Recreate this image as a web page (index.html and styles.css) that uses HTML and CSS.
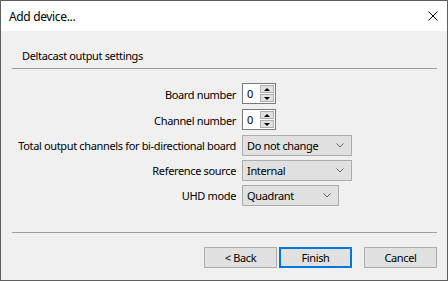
FILE: index.html
```html
<!DOCTYPE html>
<html lang="en">
<head>
  <meta charset="UTF-8" />
  <title>Add device...</title>
  <link rel="stylesheet" href="styles.css">
</head>
<body>
  <div class="window">
    <!-- title bar -->
    <div class="titlebar">
      <span class="title">Add device...</span>
      <svg class="close" width="10" height="10" viewBox="0 0 10 10">
        <path d="M0.5 0.5 L9.5 9.5 M9.5 0.5 L0.5 9.5" stroke="#000" stroke-width="1" fill="none"/>
      </svg>
    </div>

    <div class="content">
      <div class="heading">Deltacast output settings</div>
      <div class="rule"></div>

      <!-- settings form -->
      <div class="form">
        <label class="label">Board number</label>
        <div class="spin">
          <div class="spin-field">0</div>
          <div class="spin-btns">
            <div class="spin-btn"><span class="tri up"></span></div>
            <div class="spin-btn"><span class="tri down"></span></div>
          </div>
        </div>

        <label class="label">Channel number</label>
        <div class="spin">
          <div class="spin-field">0</div>
          <div class="spin-btns">
            <div class="spin-btn"><span class="tri up"></span></div>
            <div class="spin-btn"><span class="tri down"></span></div>
          </div>
        </div>

        <label class="label">Total output channels for bi-directional board</label>
        <div class="combo wide">
          <span>Do not change</span>
          <svg class="chev" width="8" height="5" viewBox="0 0 8 5"><path d="M0.5 0.5 L4 4 L7.5 0.5" stroke="#606060" fill="none"/></svg>
        </div>

        <label class="label">Reference source</label>
        <div class="combo wide">
          <span>Internal</span>
          <svg class="chev" width="8" height="5" viewBox="0 0 8 5"><path d="M0.5 0.5 L4 4 L7.5 0.5" stroke="#606060" fill="none"/></svg>
        </div>

        <label class="label">UHD mode</label>
        <div class="combo narrow">
          <span>Quadrant</span>
          <svg class="chev" width="8" height="5" viewBox="0 0 8 5"><path d="M0.5 0.5 L4 4 L7.5 0.5" stroke="#606060" fill="none"/></svg>
        </div>
      </div>

      <div class="rule bottom"></div>

      <!-- wizard buttons -->
      <div class="buttons">
        <button class="button">&lt; Back</button>
        <button class="button default">Finish</button>
        <button class="button cancel">Cancel</button>
      </div>
    </div>
  </div>
</body>
</html>
```

FILE: styles.css
```css
/* page & window frame */
body {
  margin: 0;
  font-family: "Noto Sans", sans-serif;
  font-size: 11px;
  letter-spacing: -0.35px;
  color: #000;
}
.window {
  width: 448px;
  height: 281px;
  box-sizing: border-box;
  border: 1px solid #5f5f5f;
  background: #f0f0f0;
}

/* title bar */
.titlebar {
  height: 30px;
  background: #fff;
  display: flex;
  align-items: center;
  padding: 0 9px 0 8px;
}
.title {
  flex: 1;
  font-size: 12px;
}
.close {
  display: block;
}

/* body */
.content {
  padding: 0 10px 0 11px;
}
.heading {
  padding: 17px 0 0 10px;
  height: 20px;
  line-height: 16px;
}
.rule {
  height: 1px;
  background: #a0a0a0;
}
.rule.bottom {
  margin-top: 26px;
}

/* form rows */
.form {
  display: grid;
  grid-template-columns: 224px auto;
  column-gap: 6px;
  row-gap: 4px;
  align-items: center;
  justify-items: start;
  margin-top: 14px;
}
.label {
  justify-self: end;
  white-space: nowrap;
}

/* spin box */
.spin {
  display: flex;
  height: 21px;
  margin-bottom: 1px;
}
.spin-field {
  width: 17px;
  box-sizing: border-box;
  border: 1px solid #7a7a7a;
  border-right: none;
  background: #fff;
  padding-left: 4px;
  line-height: 19px;
}
.spin-btns {
  display: flex;
  flex-direction: column;
  justify-content: space-between;
  width: 17px;
  border: 1px solid #7a7a7a;
  border-left: none;
  background: #fff;
  padding: 1px;
  box-sizing: border-box;
}
.spin-btn {
  height: 8px;
  box-sizing: border-box;
  background: #e1e1e1;
  border: 1px solid #adadad;
  display: flex;
  align-items: center;
  justify-content: center;
}
.tri {
  width: 0;
  height: 0;
  border-left: 3px solid transparent;
  border-right: 3px solid transparent;
}
.tri.up { border-bottom: 3px solid #000; }
.tri.down { border-top: 3px solid #000; }

/* combo boxes */
.combo {
  height: 21px;
  box-sizing: border-box;
  background: #e1e1e1;
  border: 1px solid #adadad;
  display: flex;
  align-items: center;
  padding: 0 7px 0 4px;
}
.combo span {
  flex: 1;
}
.combo.wide { width: 110px; }
.combo.narrow { width: 97px; }

/* wizard buttons */
.buttons {
  display: flex;
  justify-content: flex-end;
  padding-top: 14px;
}
.button {
  width: 73px;
  height: 21px;
  padding: 0;
  margin-left: 2px;
  font-family: inherit;
  font-size: 11px;
  letter-spacing: -0.35px;
  background: #e1e1e1;
  border: 1px solid #adadad;
  color: #000;
}
.button.default {
  border: 2px solid #0078d7;
}
.button.cancel {
  margin-left: 12px;
}
```
